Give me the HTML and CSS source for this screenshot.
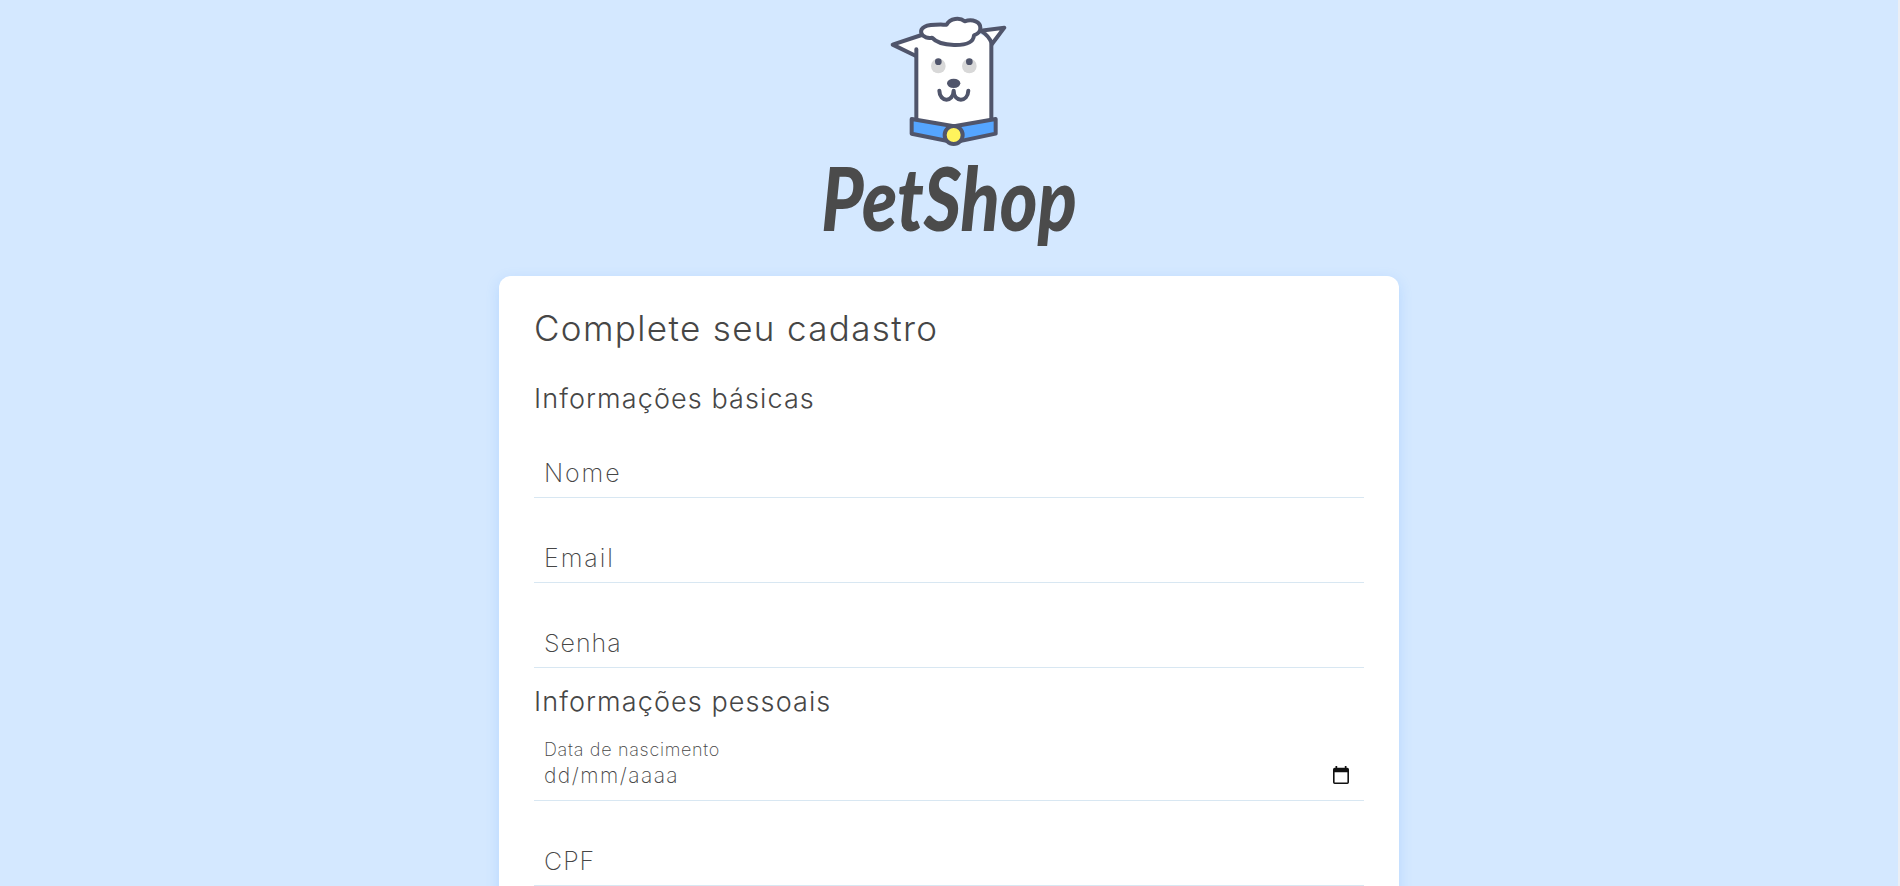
FILE: index.html
```html
<!DOCTYPE html>
<html lang="pt-BR">
<head>
<meta charset="utf-8">
<title>PetShop</title>
<link rel="stylesheet" href="styles.css">
</head>
<body>
<div class="page">
<header class="brand">
<svg class="brand__dog" viewBox="0 0 480 480" aria-hidden="true">
<path class="face" d="M138 360V150Q148 100 190 100H315Q362 105 363 145V360L252 380Z"/>
<path class="ink face" d="M185 108L155 105L68 134L138 168M332 92L403 83L366 132Q358 108 332 92Z"/>
<path class="ink" d="M139 148V358M364 132V358"/>
<path class="ink face" d="M168 112C150 105 148 88 164 80C180 72 209 74 230 74C240 54 270 52 284 64C308 56 332 66 331 84C332 94 322 102 312 106C310 126 294 136 252 135C218 134 199 128 186 113Q176 115 168 112Z"/>
<circle class="eye" cx="205" cy="198" r="22"/><circle class="eye" cx="298" cy="198" r="22"/>
<circle class="dark" cx="205" cy="185" r="10"/><circle class="dark" cx="298" cy="185" r="10"/>
<ellipse class="dark" cx="251" cy="250" rx="20" ry="14"/>
<path class="ink" d="M208 272C209 308 250 308 251 272C252 308 293 308 295 272"/>
<path class="ink collar" d="M125 357L252 379L377 357V401L252 427L125 401Z"/>
<circle class="ink tag" cx="251" cy="405" r="27"/>
</svg>
<div class="brand__name">PetShop</div>
</header>
<main class="card">
<h1 class="card__title">Complete seu cadastro</h1>
<h2 class="section">Informações básicas</h2>
<label class="field"><span class="field__label field__label--wide">Nome</span></label>
<label class="field"><span class="field__label field__label--wide">Email</span></label>
<label class="field"><span class="field__label">Senha</span></label>
<h2 class="section section--personal">Informações pessoais</h2>
<div class="field field--date">
<span class="field__caption">Data de nascimento</span>
<div class="date"><span class="date__value">dd/mm/aaaa</span>
<svg class="date__icon" viewBox="0 0 16 18" aria-hidden="true"><path d="M1.7 1.7H14.3Q16 1.7 16 3.4V16.3Q16 18 14.3 18H1.7Q0 18 0 16.3V3.4Q0 1.7 1.7 1.7ZM1.6 6.2V16.4H14.4V6.2Z" fill-rule="evenodd"/><path d="M2.5 0H4.2V2H2.5ZM11.8 0H13.5V2H11.8Z"/></svg></div>
</div>
<label class="field"><span class="field__label">CPF</span></label>
</main>
</div>
</body>
</html>
```
FILE: styles.css
```css
* { box-sizing: border-box; }
body { margin: 0; background: #d4e8ff; color: #464646; font-family: Inter, sans-serif; }
.page { height: 886px; overflow: hidden; display: flex; flex-direction: column; align-items: center; border-right: 2px solid #ebeef4; }
.brand { flex: none; height: 276px; display: flex; flex-direction: column; align-items: center; }
.brand__dog { width: 160px; height: 160px; flex: none; margin-left: 2px; }
.face { fill: #fff; }
.ink { stroke: #50556b; stroke-width: 12; stroke-linecap: round; stroke-linejoin: round; fill: none; }
.ink.face { fill: #fff; }
.ink.collar { fill: #55a5ff; }
.ink.tag { fill: #fff35c; }
.eye { fill: #d8d8d8; }
.dark { fill: #50556b; }
.brand__name { font: italic 900 72px/84px Lato, sans-serif; color: #4b4b4b; white-space: nowrap; transform: scaleY(1.22); transform-origin: 50% 66px; }
.card { flex: none; width: 900px; height: 700px; padding: 30px 35px; background: #fff; border-radius: 12px; box-shadow: 0 4px 14px rgba(66, 150, 255, .2); }
.card__title { margin: 0 0 35px; font-size: 35px; line-height: 44px; font-weight: 300; letter-spacing: 1.35px; }
.section { margin: 0; font-size: 27px; line-height: 28px; font-weight: 300; letter-spacing: 1.1px; }
.section--personal { margin-top: 20px; }
.field { display: flex; flex-direction: column; justify-content: flex-end; height: 85px; padding: 0 10px 9px; border-bottom: 1px solid #d8e7f2; }
.field__label { font-size: 25px; line-height: 30px; font-weight: 200; letter-spacing: 1px; }
.field__label--wide { letter-spacing: 1.9px; }
.field--date { padding-bottom: 12px; gap: 3px; }
.field__caption { font-size: 18px; line-height: 22px; font-weight: 200; letter-spacing: .7px; }
.date { display: flex; justify-content: space-between; height: 24px; }
.date__value { font-size: 21px; line-height: 24px; font-weight: 200; letter-spacing: 1.45px; }
.date__icon { width: 16px; height: 18px; margin: 2px 5px 0 0; fill: #111; }
```
